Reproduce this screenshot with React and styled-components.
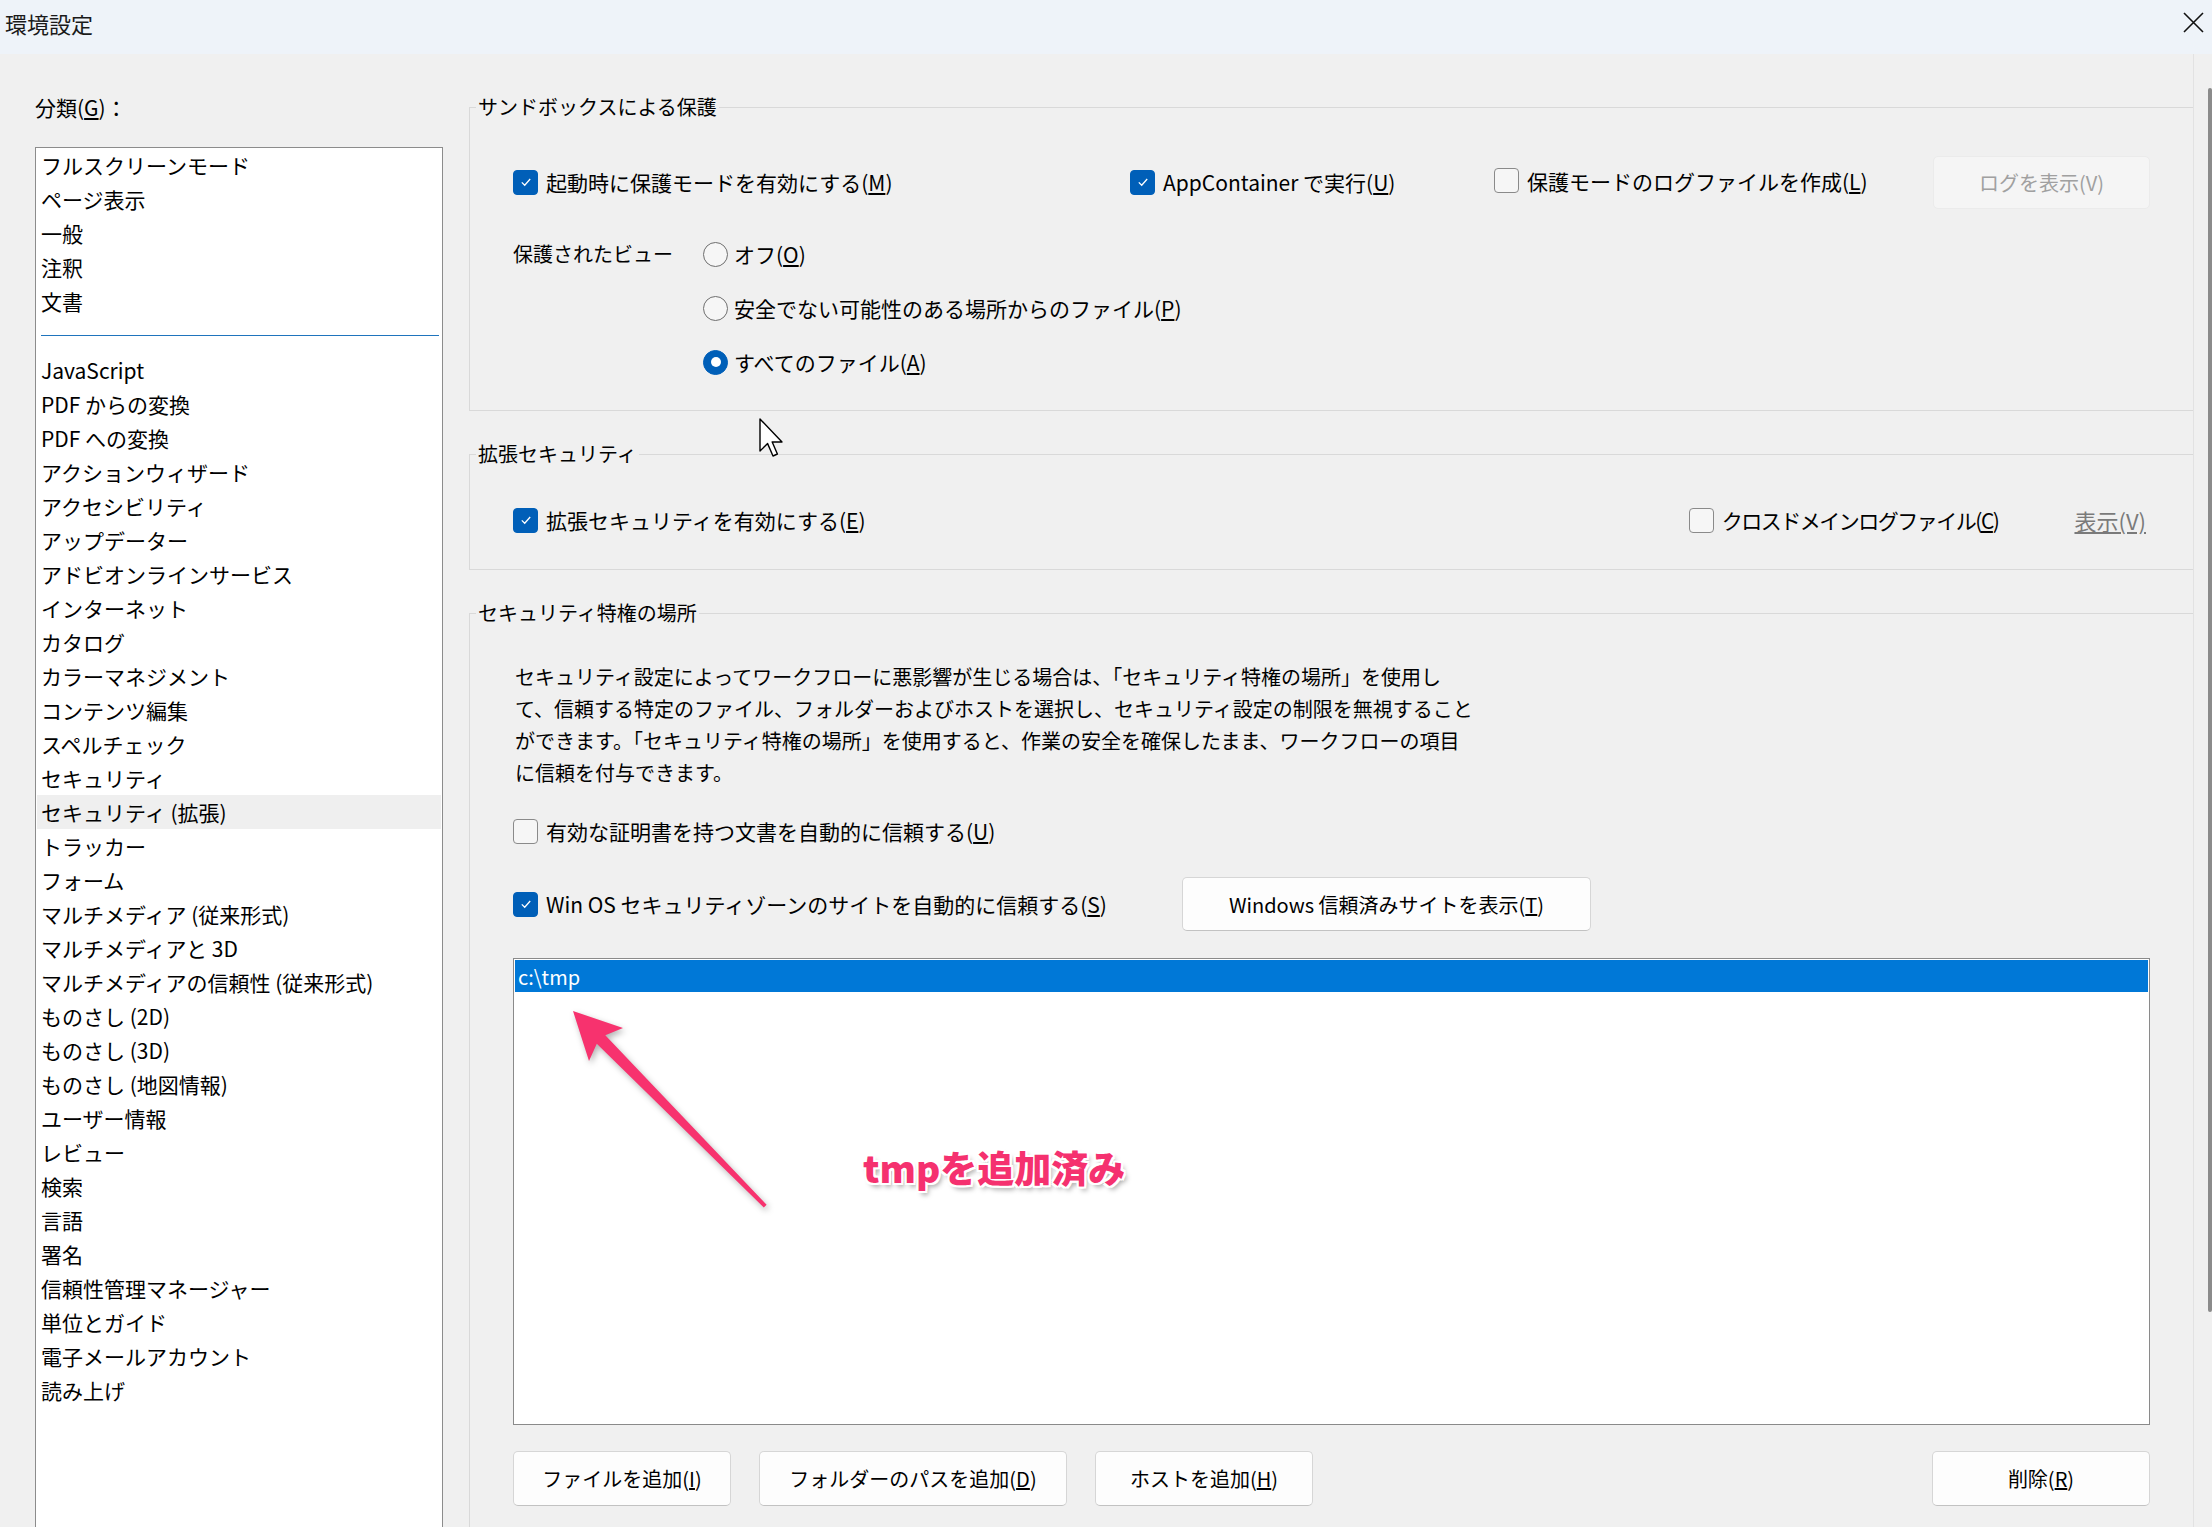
import React from "react"
import styled, { createGlobalStyle } from "styled-components"

const GlobalStyle = createGlobalStyle`
  html, body {
    margin: 0;
    padding: 0;
    background: #f0f0f0;
  }
  body {
    font-family: "Noto Sans CJK JP", "Noto Sans", sans-serif;
    color: #000;
  }
  * {
    box-sizing: border-box;
  }
`

const FONT = `"Noto Sans CJK JP", "Noto Sans", sans-serif`

// Window frame
const Window = styled.div`
  position: relative;
  width: 2212px;
  height: 1527px;
  overflow: hidden;
  display: flex;
  flex-direction: column;
  background: #f0f0f0;
  font-family: ${FONT};
`

const TitleBar = styled.div`
  height: 54px;
  flex: none;
  display: flex;
  align-items: center;
  padding: 0 8px 0 5px;
  background: #eef3f9;
`

const Title = styled.div`
  font-size: 22px;
  line-height: 30px;
  color: #1a1a1a;
  margin-top: -8px;
`

const CloseButton = styled.div`
  margin-left: auto;
  width: 21px;
  height: 21px;
  margin-top: -10px;
  display: flex;
`

const Body = styled.div`
  flex: 1;
  display: flex;
  min-height: 0;
`

// Left category list
const Sidebar = styled.div`
  width: 469px;
  flex: none;
  display: flex;
  flex-direction: column;
  padding: 36px 0 0 35px;
`

const CategoryLabel = styled.div`
  font-size: 21px;
  line-height: 34px;
  margin-bottom: 23px;
`

const CategoryList = styled.div`
  flex: 1;
  width: 408px;
  background: #fff;
  border: 1px solid #8c8c8c;
  border-bottom: none;
`

const CategoryItem = styled.div`
  height: 34px;
  line-height: 34px;
  font-size: 21px;
  padding-left: ${(p) => (p.$selected ? "4px" : "5px")};
  margin: ${(p) => (p.$selected ? "0 1px" : "0")};
  background: ${(p) => (p.$selected ? "#efefef" : "transparent")};
  white-space: nowrap;
`

const CategorySeparator = styled.div`
  height: 35px;
  padding: 17px 3px 0 5px;
  &::after {
    content: "";
    display: block;
    height: 1px;
    background: #1f74bd;
  }
`

// Right settings pane
const SettingsPane = styled.div`
  flex: 1;
  padding-top: 38px;
  border-right: 1px solid #e2e2e2;
  display: flex;
  flex-direction: column;
  gap: 28px;
`

const Group = styled.fieldset`
  margin: 0;
  min-width: 0;
  padding: 0;
  border: 1px solid #d9d9d9;
  border-right: none;
  ${(p) => (p.$open ? "border-bottom: none; flex: 1;" : "")}
`

const Legend = styled.legend`
  margin-left: 6px;
  padding: 0 2px;
  font-size: 20px;
  line-height: 30px;
`

const GroupBody = styled.div`
  padding: ${(p) => p.$pad || "0"} 43px ${(p) => p.$padBottom || "0"} 43px;
`

const TopRow = styled.div`
  display: grid;
  grid-template-columns: 617px 364px 1fr 217px;
  align-items: center;
  height: 54px;
`

const CheckItem = styled.label`
  display: inline-flex;
  align-items: center;
  gap: 8px;
  font-size: 21px;
  line-height: 30px;
  white-space: nowrap;
`

const Box = styled.span`
  width: 25px;
  height: 25px;
  flex: none;
  border-radius: 4px;
  display: flex;
  align-items: center;
  justify-content: center;
  background: ${(p) => (p.$checked ? "#005fb8" : "#f6f6f6")};
  border: 1px solid ${(p) => (p.$checked ? "#005fb8" : "#8a8a8a")};
`

const RadioDot = styled.span`
  width: 25px;
  height: 25px;
  flex: none;
  border-radius: 50%;
  display: flex;
  align-items: center;
  justify-content: center;
  background: ${(p) => (p.$checked ? "#005fb8" : "#f6f6f6")};
  border: 1.5px solid ${(p) => (p.$checked ? "#005fb8" : "#6e6e6e")};
  &::after {
    content: "";
    display: ${(p) => (p.$checked ? "block" : "none")};
    width: 10px;
    height: 10px;
    border-radius: 50%;
    background: #fff;
  }
`

const RadioItem = styled.label`
  display: inline-flex;
  align-items: center;
  gap: 6px;
  font-size: 21px;
  line-height: 30px;
  white-space: nowrap;
`

const ViewBlock = styled.div`
  display: grid;
  grid-template-columns: 190px auto;
  margin-top: 30px;
`

const FieldLabel = styled.div`
  font-size: 20px;
  line-height: 30px;
`

const RadioStack = styled.div`
  display: flex;
  flex-direction: column;
  gap: 24px;
`

const Button = styled.div`
  height: ${(p) => p.$h || 55}px;
  width: ${(p) => p.$w}px;
  flex: none;
  display: flex;
  align-items: center;
  justify-content: center;
  font-size: 20px;
  white-space: nowrap;
  border-radius: 5px;
  background: ${(p) => (p.$disabled ? "#f5f5f5" : "#fdfdfd")};
  color: ${(p) => (p.$disabled ? "#a0a0a0" : "#000")};
  border: 1px solid ${(p) => (p.$disabled ? "#ebebeb" : "#d6d6d6")};
  border-bottom-color: ${(p) => (p.$disabled ? "#ebebeb" : "#c2c2c2")};
`

const EnhancedRow = styled.div`
  display: flex;
  align-items: center;
  height: 30px;
`

const RightCheck = styled(CheckItem)`
  margin-left: auto;
  letter-spacing: -1.5px;
`

const LinkText = styled.span`
  margin-left: 76px;
  margin-right: 4px;
  font-size: 22px;
  line-height: 30px;
  color: #7a7a7a;
  text-decoration: underline;
`

const Paragraph = styled.p`
  margin: 0;
  font-size: 20px;
  line-height: 32px;
  white-space: nowrap;
  padding-left: 2px;
`

const SingleRow = styled.div`
  height: 30px;
  display: flex;
  align-items: center;
  margin-top: ${(p) => p.$mt || 0}px;
`

const ZoneRow = styled.div`
  display: grid;
  grid-template-columns: 669px auto;
  align-items: center;
  margin-top: 31px;
`

const LocationList = styled.div`
  position: relative;
  margin-top: 27px;
  height: 467px;
  background: #fff;
  border: 1px solid #8a8a8a;
  padding: 1px;
`

const LocationRow = styled.div`
  height: 32px;
  line-height: 34px;
  padding-left: 3px;
  font-size: 20px;
  color: #fff;
  background: ${(p) => (p.$selected ? "#0078d7" : "transparent")};
`

const Annotation = styled.div`
  position: absolute;
  left: 349px;
  top: 184px;
  font-size: 37px;
  line-height: 48px;
  font-weight: 900;
  color: #f5316f;
  white-space: nowrap;
  text-shadow:
    2px 0 0 #fff, -2px 0 0 #fff, 0 2px 0 #fff, 0 -2px 0 #fff,
    2px 2px 0 #fff, -2px -2px 0 #fff, 2px -2px 0 #fff, -2px 2px 0 #fff,
    3px 4px 5px rgba(0, 0, 0, 0.35);
`

const ArrowSvg = styled.svg`
  position: absolute;
  left: 0;
  top: 0;
  overflow: visible;
  filter: drop-shadow(2px 3px 3px rgba(0, 0, 0, 0.3));
`

const ButtonRow = styled.div`
  display: flex;
  gap: 28px;
  margin-top: 26px;
`

const PushRight = styled.div`
  margin-left: auto;
`

// Scrollbar
const ScrollTrack = styled.div`
  width: 18px;
  flex: none;
  padding: 34px 0 0 14px;
`

const ScrollThumb = styled.div`
  width: 4px;
  height: 1224px;
  border-radius: 2px;
  background: #8b8b8b;
`

const Cursor = styled.svg`
  position: absolute;
  left: 759px;
  top: 418px;
`

const Check = ({ checked, children }) => (
  <CheckItem>
    <Box $checked={checked}>
      {checked && (
        <svg width="16" height="16" viewBox="0 0 16 16">
          <path d="M3.8 8.4 L6.7 11.2 L12.2 5" fill="none" stroke="#fff" strokeWidth="1.3" />
        </svg>
      )}
    </Box>
    {children}
  </CheckItem>
)

const Radio = ({ checked, children }) => (
  <RadioItem>
    <RadioDot $checked={checked} />
    {children}
  </RadioItem>
)

const topCategories = ["フルスクリーンモード", "ページ表示", "一般", "注釈", "文書"]

const otherCategories = [
  "JavaScript",
  "PDF からの変換",
  "PDF への変換",
  "アクションウィザード",
  "アクセシビリティ",
  "アップデーター",
  "アドビオンラインサービス",
  "インターネット",
  "カタログ",
  "カラーマネジメント",
  "コンテンツ編集",
  "スペルチェック",
  "セキュリティ",
  "セキュリティ (拡張)",
  "トラッカー",
  "フォーム",
  "マルチメディア (従来形式)",
  "マルチメディアと 3D",
  "マルチメディアの信頼性 (従来形式)",
  "ものさし (2D)",
  "ものさし (3D)",
  "ものさし (地図情報)",
  "ユーザー情報",
  "レビュー",
  "検索",
  "言語",
  "署名",
  "信頼性管理マネージャー",
  "単位とガイド",
  "電子メールアカウント",
  "読み上げ",
]

const App = () => {
  return (
    <>
      <GlobalStyle />
      <Window>
        <TitleBar>
          <Title>環境設定</Title>
          <CloseButton>
            <svg width="21" height="21" viewBox="0 0 21 21">
              <path d="M1 1 L20 20 M20 1 L1 20" stroke="#111" strokeWidth="1.6" />
            </svg>
          </CloseButton>
        </TitleBar>

        <Body>
          <Sidebar>
            <CategoryLabel>
              分類(<u>G</u>)：
            </CategoryLabel>
            <CategoryList>
              {topCategories.map((c) => (
                <CategoryItem key={c}>{c}</CategoryItem>
              ))}
              <CategorySeparator />
              {otherCategories.map((c) => (
                <CategoryItem key={c} $selected={c === "セキュリティ (拡張)"}>
                  {c}
                </CategoryItem>
              ))}
            </CategoryList>
          </Sidebar>

          <SettingsPane>
            <Group>
              <Legend>サンドボックスによる保護</Legend>
              <GroupBody $pad="33px" $padBottom="33px">
                <TopRow>
                  <div>
                    <Check checked>
                      <span>
                        起動時に保護モードを有効にする(<u>M</u>)
                      </span>
                    </Check>
                  </div>
                  <div>
                    <Check checked>
                      <span>
                        AppContainer で実行(<u>U</u>)
                      </span>
                    </Check>
                  </div>
                  <div>
                    <Check>
                      <span>
                        保護モードのログファイルを作成(<u>L</u>)
                      </span>
                    </Check>
                  </div>
                  <Button $w={217} $h={53} $disabled>
                    ログを表示(V)
                  </Button>
                </TopRow>
                <ViewBlock>
                  <FieldLabel>保護されたビュー</FieldLabel>
                  <RadioStack>
                    <Radio>
                      <span>
                        オフ(<u>O</u>)
                      </span>
                    </Radio>
                    <Radio>
                      <span>
                        安全でない可能性のある場所からのファイル(<u>P</u>)
                      </span>
                    </Radio>
                    <Radio checked>
                      <span>
                        すべてのファイル(<u>A</u>)
                      </span>
                    </Radio>
                  </RadioStack>
                </ViewBlock>
              </GroupBody>
            </Group>

            <Group>
              <Legend>拡張セキュリティ</Legend>
              <GroupBody $pad="36px" $padBottom="34px">
                <EnhancedRow>
                  <Check checked>
                    <span>
                      拡張セキュリティを有効にする(<u>E</u>)
                    </span>
                  </Check>
                  <RightCheck>
                    <Box />
                    <span>
                      クロスドメインログファイル(<u>C</u>)
                    </span>
                  </RightCheck>
                  <LinkText>表示(V)</LinkText>
                </EnhancedRow>
              </GroupBody>
            </Group>

            <Group $open>
              <Legend>セキュリティ特権の場所</Legend>
              <GroupBody $pad="33px">
                <Paragraph>
                  セキュリティ設定によってワークフローに悪影響が生じる場合は、「セキュリティ特権の場所」を使用し
                  <br />
                  て、信頼する特定のファイル、フォルダーおよびホストを選択し、セキュリティ設定の制限を無視すること
                  <br />
                  ができます。「セキュリティ特権の場所」を使用すると、作業の安全を確保したまま、ワークフローの項目
                  <br />
                  に信頼を付与できます。
                </Paragraph>
                <SingleRow $mt={27}>
                  <Check>
                    <span>
                      有効な証明書を持つ文書を自動的に信頼する(<u>U</u>)
                    </span>
                  </Check>
                </SingleRow>
                <ZoneRow>
                  <div>
                    <Check checked>
                      <span>
                        Win OS セキュリティゾーンのサイトを自動的に信頼する(<u>S</u>)
                      </span>
                    </Check>
                  </div>
                  <Button $w={409} $h={54}>
                    <span>
                      Windows 信頼済みサイトを表示(<u>T</u>)
                    </span>
                  </Button>
                </ZoneRow>
                <LocationList>
                  <LocationRow $selected>c:\tmp</LocationRow>
                  <ArrowSvg width="260" height="250" viewBox="0 0 260 250">
                    <polygon
                      points="59,52 109,69 91.3,76.3 252.6,245.8 249.8,248.6 82.8,84.7 75,102"
                      fill="#f7326e"
                    />
                  </ArrowSvg>
                  <Annotation>tmpを追加済み</Annotation>
                </LocationList>
                <ButtonRow>
                  <Button $w={218}>
                    <span>
                      ファイルを追加(<u>I</u>)
                    </span>
                  </Button>
                  <Button $w={308}>
                    <span>
                      フォルダーのパスを追加(<u>D</u>)
                    </span>
                  </Button>
                  <Button $w={218}>
                    <span>
                      ホストを追加(<u>H</u>)
                    </span>
                  </Button>
                  <PushRight>
                    <Button $w={218}>
                      <span>
                        削除(<u>R</u>)
                      </span>
                    </Button>
                  </PushRight>
                </ButtonRow>
              </GroupBody>
            </Group>
          </SettingsPane>

          <ScrollTrack>
            <ScrollThumb />
          </ScrollTrack>
        </Body>

        <Cursor width="24" height="40" viewBox="0 0 12 20">
          <polygon
            points="0.5,0.5 0.5,16.5 4.3,12.8 7,19 9.2,18 6.6,12 11.5,12"
            fill="#fff"
            stroke="#000"
            strokeWidth="0.7"
            strokeLinejoin="round"
          />
        </Cursor>
      </Window>
    </>
  )
}

export default App
